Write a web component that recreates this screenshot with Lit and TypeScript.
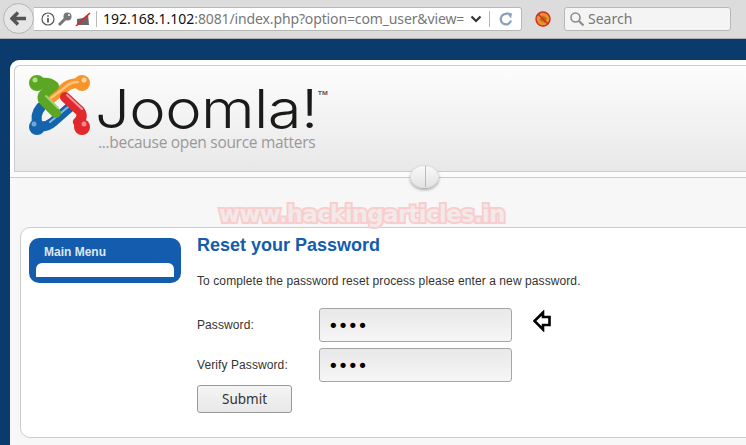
import { LitElement, html, css, svg } from "lit";
import { customElement } from "lit/decorators.js";

const logo = svg`<svg class="logo" width="64" height="64" viewBox="28 74 64 64" fill="none" stroke-linecap="round" stroke-linejoin="round">
  <g>
    <path d="M49 100 L67 86 Q72 83 80 83" stroke="#f7952b" stroke-width="10"/>
    <circle cx="82" cy="83" r="8" fill="#f7952b"/>
    <path d="M51 98 L68 85 Q72 82 78 82" stroke="#fbc27a" stroke-width="2.5"/>
    <path d="M38 126 Q46 128 53 122 L70 107" stroke="#1463ad" stroke-width="10"/>
    <path d="M38 125 Q34 115 41 107" stroke="#1463ad" stroke-width="10"/>
    <circle cx="37" cy="127" r="8" fill="#1463ad"/>
    <path d="M50 122 L68 107" stroke="#8ab8e0" stroke-width="2"/>
    <path d="M37 84 Q48 81 54 86 L45 93 Q40 98 45 102 L56 113" stroke="#5ba623" stroke-width="10"/>
    <circle cx="37" cy="83" r="8" fill="#5ba623"/>
    <path d="M46 96 L58 108" stroke="#a6d36f" stroke-width="2"/>
    <path d="M65 97 L80 111 Q84 117 78 122 L80 125" stroke="#e2272d" stroke-width="10"/>
    <circle cx="82" cy="127" r="8" fill="#e2272d"/>
    <path d="M67 95 L82 109" stroke="#f09a9c" stroke-width="2"/>
    <circle cx="35" cy="80" r="2.5" fill="#b5dc85"/>
    <circle cx="84" cy="80" r="2.5" fill="#fcd6a0"/>
    <circle cx="34" cy="124" r="2.5" fill="#6ea7d8"/>
    <circle cx="84" cy="124" r="2.5" fill="#f08a8c"/>
  </g>
</svg>`;

@customElement("app-root")
export class AppRoot extends LitElement {
  static styles = css`
    :host { display: block; width: 746px; height: 445px; overflow: hidden; position: relative; background: #0b3a6d; font-family: "Liberation Sans", Arial, sans-serif; }
    .toolbar { height: 39px; box-sizing: border-box; background: #dcdcdc; border-bottom: 1px solid #aab0b6; display: flex; align-items: flex-start; font-family: "Noto Sans", sans-serif; font-size: 14px; }
    .back { flex: none; width: 31px; height: 31px; margin: 3px 0 0 3px; box-sizing: border-box; border: 1px solid #b4b4b4; border-radius: 50%; background: #e6e6e6; display: flex; align-items: center; justify-content: center; position: relative; z-index: 1; }
    .url { flex: none; width: 488px; height: 24px; margin: 7px 0 0 0; box-sizing: border-box; background: #fff; border: 1px solid #b8b8b8; border-left: none; border-radius: 0 3px 3px 0; display: flex; align-items: center; white-space: nowrap; overflow: hidden; }
    .sep { flex: none; width: 1px; height: 16px; background: #b8b8b8; }
    .site-icons { flex: none; display: flex; align-items: center; gap: 2px; margin-left: 7px; }
    .addr { flex: 1; min-width: 0; overflow: hidden; margin-left: 6px; color: #777; line-height: 22px; letter-spacing: -.13px; }
    .addr b { font-weight: 400; color: #111; letter-spacing: 0; }
    .end-icons { flex: none; display: flex; align-items: center; }
    .ext { flex: none; margin: 11px 0 0 13px; width: 16px; height: 16px; }
    .search { flex: none; width: 167px; height: 24px; margin: 7px 0 0 13px; box-sizing: border-box; background: #f4f4f4; border: 1px solid #b8b8b8; border-radius: 3px; display: flex; align-items: center; gap: 3px; padding-left: 4px; color: #777; line-height: 22px; }
    .wrap { margin: 21px 0 0 10px; width: 800px; height: 400px; background: #fff; border-radius: 9px 0 0 0; box-sizing: border-box; padding-top: 5px; position: relative; }
    .head { margin-left: 4px; height: 107px; box-sizing: border-box; border: 1px solid #ccc; border-right: none; border-radius: 6px 0 0 0; background: linear-gradient(#fdfdfd, #e8e8e8); display: flex; padding: 8px 0 0 13px; gap: 6px; }
    .brand { display: flex; flex-direction: column; }
    .word { font-family: "Inter", sans-serif; font-weight: 300; font-size: 53px; line-height: 44px; letter-spacing: -.5px; color: #1c1a18; margin: 13px 0 0 -3px; position: relative; transform: scaleX(1.16); transform-origin: 0 0; white-space: nowrap; }
    .word sup { font: 700 6px "Liberation Sans", sans-serif; letter-spacing: 0; position: absolute; top: 3px; margin-left: 0; color: #555; }
    .tag { font-family: "Open Sans", sans-serif; font-size: 15.5px; color: #999; letter-spacing: -.3px; line-height: 18px; margin-top: 2px; }
    .band { height: 5px; background: #fbfbfb; border-bottom: 1px solid #ccc; }
    .knob { position: absolute; left: 400px; top: 105px; width: 29px; height: 23px; box-sizing: border-box; border-radius: 50%; background: linear-gradient(#f8f8f8, #e4e4e4); border: 1px solid #ddd; box-shadow: 0 2px 3px rgba(0,0,0,.3); }
    .knob::after { content: ""; position: absolute; left: 14px; top: 0; bottom: 0; width: 1px; background: #bbb; }
    .body { background: #f7f7f7; height: 300px; padding: 49px 0 0 10px; }
    .mark { position: absolute; left: 209px; top: 139px; font: 700 22.7px "DejaVu Sans", sans-serif; letter-spacing: -.55px; color: #f2e9e9; -webkit-text-stroke: 4px #f9cdcd; paint-order: stroke fill; line-height: 30px; white-space: nowrap; }
    .card { width: 790px; height: 211px; box-sizing: border-box; background: #fff; border: 1px solid #ccc; border-radius: 10px; padding: 10px 0 0 8px; display: flex; gap: 16px; }
    .menu { flex: none; width: 152px; height: 45px; box-sizing: border-box; background: #135cae; border-radius: 10px; padding: 0 7px; display: flex; flex-direction: column; }
    .menu h3 { margin: 0; padding-left: 8px; height: 25px; font-size: 12px; line-height: 29px; color: #dde7f4; font-weight: 700; }
    .menu div { height: 14px; background: #fff; border-radius: 6px 6px 0 0; }
    .main { flex: none; color: #333; font-size: 12px; letter-spacing: .09px; margin-top: -3px; }
    h1 { margin: 0; font-size: 18px; line-height: 20px; font-weight: 700; color: #135cae; letter-spacing: 0; }
    p { margin: 18px 0 0; line-height: 16px; }
    form { margin: 19px 0 0; display: grid; grid-template-columns: 122px 193px 40px; row-gap: 6px; align-items: center; }
    input { width: 193px; height: 34px; box-sizing: border-box; border: 1px solid #a6a6a6; border-radius: 3px; background: linear-gradient(#e8e8e8, #f6f6f6); padding: 0 0 0 8px; margin: 0; font: 18px "DejaVu Sans", sans-serif; letter-spacing: -.9px; color: #000; outline: none; }
    .arrow { margin: 0 0 8px 21px; display: block; }
    button { grid-column: 1 / span 3; justify-self: start; width: 95px; height: 28px; margin-top: -3px; border: 1px solid #999; border-radius: 3px; background: linear-gradient(#f4f4f4, #e8e8e8); font: 13.5px "Noto Sans", sans-serif; color: #333; padding: 0; }
  `;

  render() {
    return html`
      <div class="toolbar">
        <div class="back"><svg width="17" height="15" viewBox="0 0 17 15"><path d="M8 1.5 L2 7.5 L8 13.5 M3 7.5 H16" fill="none" stroke="#555" stroke-width="3.4"/></svg></div>
        <div class="url">
          <div class="site-icons">
            <svg width="14" height="14" viewBox="0 0 14 14"><circle cx="7" cy="7" r="6" fill="none" stroke="#555" stroke-width="1.2"/><path d="M7 3.2v1.6M7 6v4.6" stroke="#444" stroke-width="1.6"/></svg>
            <svg width="16" height="16" viewBox="0 0 16 16"><path d="M2 14 L8 8" stroke="#777" stroke-width="3"/><circle cx="10.5" cy="5.5" r="4" fill="#777"/><circle cx="12" cy="4" r="1" fill="#fff"/></svg>
            <svg width="16" height="16" viewBox="0 0 16 16"><path d="M2 14 V8 L8 7 L13 3 L14 14 Z" fill="#666"/><path d="M1 15 L15 2" stroke="#e22" stroke-width="1.6"/></svg>
          </div>
          <div class="sep" style="margin-left:5px"></div>
          <div class="addr"><b>192.168.1.102</b>:8081/index.php?option=com_user&amp;view=</div>
          <div class="end-icons">
            <svg style="margin:0 7px 0 6px" width="12" height="8" viewBox="0 0 12 8"><path d="M1.5 1.5 L6 6 L10.5 1.5" fill="none" stroke="#333" stroke-width="2.2"/></svg>
            <div class="sep"></div>
            <svg style="margin:0 8px 0 9px" width="14" height="14" viewBox="0 0 14 14"><path d="M12 8.5 A5.2 5.2 0 1 1 8.5 2.2" fill="none" stroke="#8aa0b8" stroke-width="2.2"/><path d="M7 0 L13 1.5 L12 6.5 Z" fill="#8aa0b8"/></svg>
          </div>
        </div>
        <div class="ext"><svg width="16" height="16" viewBox="0 0 16 16"><circle cx="8" cy="8" r="7" fill="#e8942a" stroke="#cf2a27" stroke-width="1.4"/><path d="M4 9 L8 4.5 L12 7 L10 12 Z" fill="#b9701b"/><path d="M3 3 L13 13" stroke="#cf2a27" stroke-width="1.4"/></svg></div>
        <div class="search"><svg width="16" height="16" viewBox="0 0 16 16"><circle cx="6.5" cy="6.5" r="4.5" fill="none" stroke="#8c8c8c" stroke-width="1.6"/><path d="M10 10 L14.5 14.5" stroke="#8c8c8c" stroke-width="2.2"/></svg><span>Search</span></div>
      </div>
      <div class="wrap">
        <div class="head">
          ${logo}
          <div class="brand">
            <div class="word">Joomla!<sup>TM</sup></div>
            <div class="tag">...because open source matters</div>
          </div>
        </div>
        <div class="band"></div>
        <div class="knob"></div>
        <div class="body">
          <div class="card">
            <div class="menu"><h3>Main Menu</h3><div></div></div>
            <div class="main">
              <h1>Reset your Password</h1>
              <p>To complete the password reset process please enter a new password.</p>
              <form>
                <label>Password:</label>
                <input type="password" value="1234" />
                <svg class="arrow" width="18" height="22" viewBox="0 0 18 22"><path d="M1.5 11 L10 2.5 V7 H16.5 V15 H10 V19.5 Z" fill="#fff" stroke="#000" stroke-width="2.6"/></svg>
                <label>Verify Password:</label>
                <input type="password" value="1234" />
                <span></span>
                <button type="button">Submit</button>
              </form>
            </div>
          </div>
        </div>
        <div class="mark">www.hackingarticles.in</div>
      </div>
    `;
  }
}
